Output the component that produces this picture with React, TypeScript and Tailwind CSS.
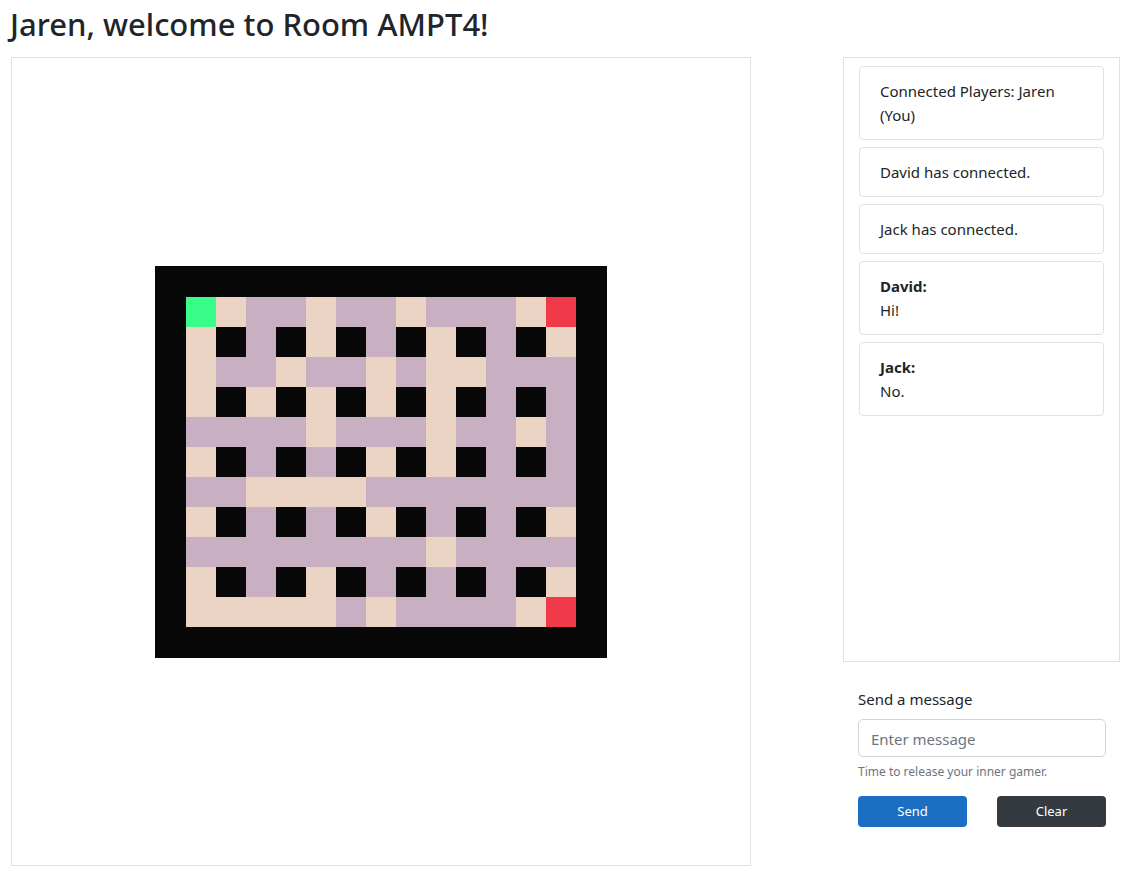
import React from "react";

const MAP = [
  "GTPPTPPTPPPTR",
  "TBPBTBPBTBPBT",
  "TPPTPPTPTTPPP",
  "TBTBTBTBTBPBP",
  "PPPPTPPPTPPTP",
  "TBPBPBTBTBPBP",
  "PPTTTTPPPPPPP",
  "TBPBPBTBPBPBT",
  "PPPPPPPPTPPPP",
  "TBPBTBPBPBPBT",
  "TTTTTPTPPPPTR",
];

const cellClass: Record<string, string> = {
  G: "bg-[#38fd88]",
  R: "bg-[#f03a4a]",
  T: "bg-[#ecd4c5]",
  P: "bg-[#c8afc2]",
  B: "bg-[#080808]",
};

function Board() {
  return (
    <div className="bg-[#080808] p-[31px]">
      <div className="grid grid-cols-[repeat(13,30px)] grid-rows-[repeat(11,30px)]">
        {MAP.flatMap((row, r) =>
          row.split("").map((c, i) => (
            <div key={`${r}-${i}`} className={`w-[30px] h-[30px] ${cellClass[c]}`} />
          ))
        )}
      </div>
    </div>
  );
}

function Card({ children }: { children: React.ReactNode }) {
  return (
    <div className="border border-[#dee2e6] rounded-[4px] px-[20px] pt-[12px] pb-[12px] leading-[24px]">
      {children}
    </div>
  );
}

export default function App() {
  return (
    <div
      className="bg-white text-[#212529] text-[15px] min-h-[877px]"
      style={{ fontFamily: '"Noto Sans", "Open Sans", sans-serif' }}
    >
      <h1 className="pl-[10px] pt-[2px] h-[57px] text-[31px] font-medium leading-[44px] text-[#212529]">
        Jaren, welcome to Room AMPT4!
      </h1>
      <div className="flex pl-[11px]">
        <div className="w-[740px] h-[809px] border border-[#dee2e6] flex items-center justify-center">
          <Board />
        </div>
        <div className="ml-[92px] w-[277px] flex flex-col">
          <div className="h-[605px] border border-[#dee2e6] px-[15px] pt-[8px] flex flex-col gap-[7px]">
            <Card>
              Connected Players: Jaren
              <br />
              (You)
            </Card>
            <Card>David has connected.</Card>
            <Card>Jack has connected.</Card>
            <Card>
              <div className="font-bold">David:</div>
              <div>Hi!</div>
            </Card>
            <Card>
              <div className="font-bold">Jack:</div>
              <div>No.</div>
            </Card>
          </div>
          <div className="px-[15px] pt-[25px]">
            <div className="leading-[24px] mb-[8px]">Send a message</div>
            <input
              className="w-[248px] h-[38px] border border-[#ced4da] rounded-[5px] px-[12px] pt-[2px] text-[15px] placeholder:text-[#6c757d] outline-none"
              placeholder="Enter message"
            />
            <div className="mt-[4px] text-[12px] leading-[21px] text-[#6c757d]">
              Time to release your inner gamer.
            </div>
            <div className="mt-[14px] flex justify-between w-[248px]">
              <button className="w-[109px] h-[31px] rounded-[4px] bg-[#1b6ec2] text-white text-[13px]">
                Send
              </button>
              <button className="w-[109px] h-[31px] rounded-[4px] bg-[#343a40] text-white text-[13px]">
                Clear
              </button>
            </div>
          </div>
        </div>
      </div>
    </div>
  );
}
